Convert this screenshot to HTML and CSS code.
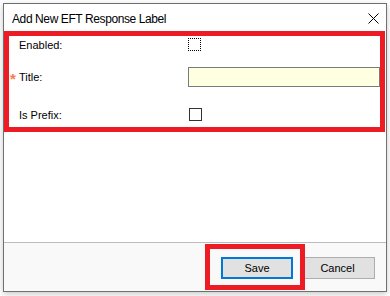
FILE: index.html
```html
<!DOCTYPE html>
<html>
<head>
<meta charset="utf-8">
<link rel="stylesheet" href="styles.css">
</head>
<body>
<div class="window">
  <div class="titlebar">
    <span class="title">Add New EFT Response Label</span>
    <span class="close"><svg width="11" height="11" viewBox="0 0 11 11"><path d="M0.5 0.5 L10.5 10.5 M10.5 0.5 L0.5 10.5" stroke="#000" stroke-width="1" fill="none"/></svg></span>
  </div>
  <div class="form">
    <div class="row r1">
      <span class="label">Enabled:</span>
      <span class="check focus"></span>
    </div>
    <div class="row r2">
      <span class="label"><span class="req">*</span>Title:</span>
      <span class="input"></span>
    </div>
    <div class="row r3">
      <span class="label">Is Prefix:</span>
      <span class="check"></span>
    </div>
  </div>
  <div class="spacer"></div>
  <div class="footer">
    <div class="hl">
      <button class="btn primary">Save</button>
    </div>
    <button class="btn cancel">Cancel</button>
  </div>
</div>
</body>
</html>
```
FILE: styles.css
```css
html, body { margin: 0; padding: 0; }
body {
  width: 390px;
  height: 296px;
  background: #ffffff;
  font-family: "Liberation Sans", Arial, sans-serif;
  overflow: hidden;
}
.window {
  margin: 3px 0 0 3px;
  width: 384px;
  height: 289px;
  box-sizing: border-box;
  border: 1px solid #707070;
  background: #ffffff;
  box-shadow: 0 2px 6px rgba(0,0,0,0.22);
  display: flex;
  flex-direction: column;
}
.titlebar {
  height: 27px;
  flex: none;
  display: flex;
  align-items: center;
  justify-content: space-between;
  padding: 0 7px 0 8px;
}
.title {
  font-size: 12px;
  letter-spacing: -0.4px;
  color: #000;
  margin-top: 2px;
}
.close { display: flex; margin-top: 2px; }
.form {
  flex: none;
  width: 381px;
  height: 101px;
  box-sizing: border-box;
  border: 5px solid #ed1c24;
  padding-left: 10px;
}
.row {
  display: grid;
  grid-template-columns: 169px 1fr;
  align-items: center;
}
.r1 { margin-top: 2px; height: 13px; }
.r2 { margin-top: 16px; height: 20px; }
.r3 { margin-top: 21px; height: 13px; }
.label {
  font-size: 11px;
  color: #000;
  display: flex;
  align-items: center;
}
.req {
  color: #f47c4a;
  width: 9px;
  margin-left: -9px;
  font-size: 15px;
  font-weight: bold;
  line-height: 11px;
  margin-top: 2px;
}
.check {
  width: 13px;
  height: 13px;
  box-sizing: border-box;
  border: 1px solid #333;
  background: #fff;
  margin-left: 1px;
}
.check.focus {
  border: 1px dotted #000;
  margin-left: 0;
}
.input {
  height: 20px;
  box-sizing: border-box;
  border: 1px solid #7a7a7a;
  background: #ffffe1;
}
.spacer { flex: 1; }
.footer {
  flex: none;
  height: 48px;
  border-top: 1px solid #bdbdbd;
  background: #f9f9f9;
  display: flex;
  justify-content: flex-end;
  align-items: flex-start;
  padding-right: 11px;
}
.hl {
  position: relative;
  z-index: 1;
  margin-top: 1px;
  height: 46px;
  box-sizing: border-box;
  border: 5px solid #ed1c24;
  padding: 8px 7px 0 11px;
}
.btn {
  font-family: "Liberation Sans", Arial, sans-serif;
  font-size: 11px;
  color: #000;
  background: #e1e1e1;
  height: 22px;
  box-sizing: border-box;
  margin: 0;
  padding: 0;
}
.primary {
  width: 72px;
  border: 2px solid #0078d7;
}
.cancel {
  width: 75px;
  margin-left: -5px;
  margin-top: 14px;
  border: 1px solid #adadad;
}
```
